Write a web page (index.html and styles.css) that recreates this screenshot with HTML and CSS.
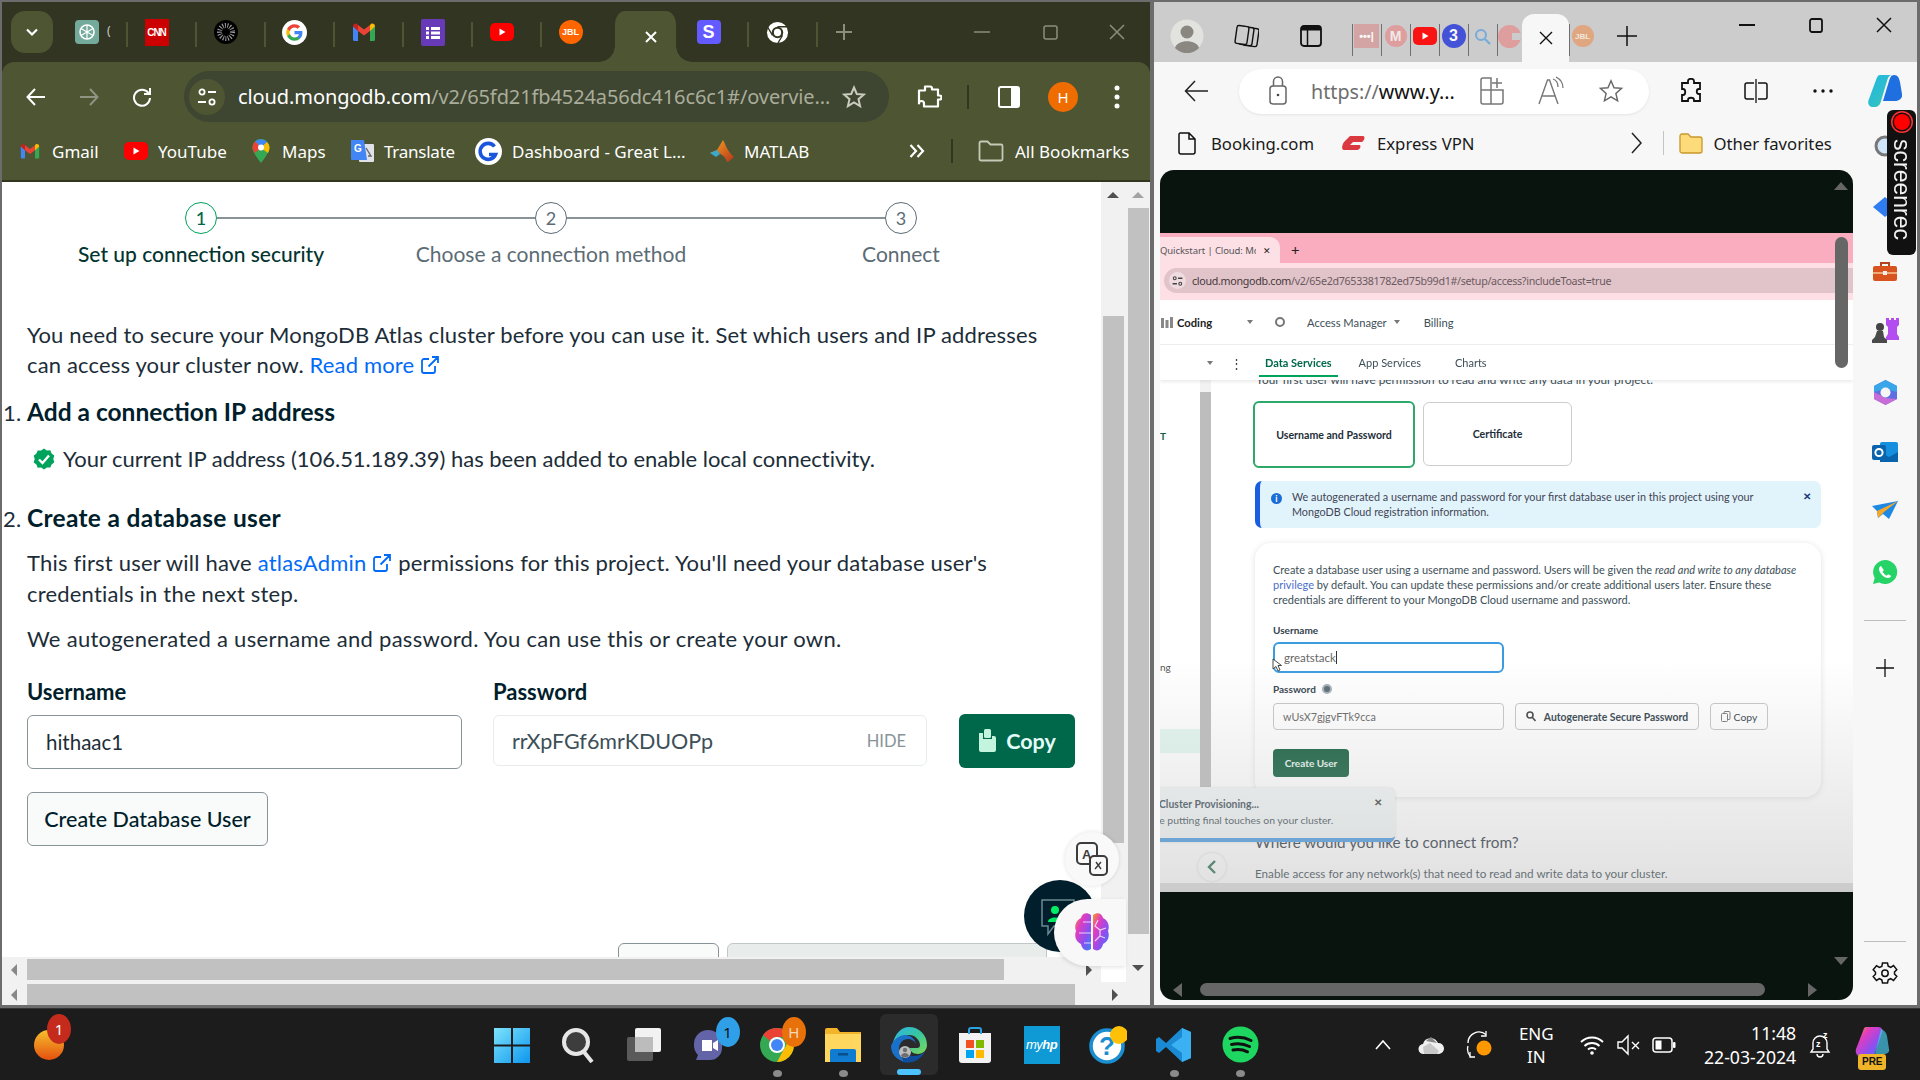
FILE: index.html
```html
<!DOCTYPE html>
<html lang="en">
<head>
<meta charset="utf-8">
<title>Desktop</title>
<link rel="stylesheet" href="styles.css">
</head>
<body>
<svg class="defs" width="0" height="0" aria-hidden="true">
  <defs>
    <symbol id="gmail" viewBox="0 0 24 24"><path fill="#4285f4" d="M1 6v13.5A1.5 1.5 0 0 0 2.5 21H6V10z"/><path fill="#34a853" d="M18 10v11h3.500a1.500 1.500 0 0 0 1.500-1.500V6z"/><path fill="#ea4335" d="M6 11V5l6 4.500L18 5v6l-6 4.500z"/><path fill="#c5221f" d="M1 6.500C1 3.500 4 3 5 4l1 1v6z"/><path fill="#fbbc04" d="M23 6.500C23 3.500 20 3 19 4l-1 1v6z"/></symbol>
    <symbol id="yt" viewBox="0 0 24 24"><rect x="0" y="3" width="24" height="18" rx="5" fill="#f00"/><path fill="#fff" d="M9.500 8.500v7l6-3.500z"/></symbol>
    <symbol id="g" viewBox="0 0 24 24"><path fill="#4285f4" d="M22.560 12.250c0-.78-.07-1.530-.2-2.250H12v4.260h5.920c-.26 1.370-1.040 2.530-2.210 3.310v2.770h3.570c2.080-1.920 3.280-4.740 3.280-8.090z"/><path fill="#34a853" d="M12 23c2.970 0 5.460-.98 7.280-2.660l-3.570-2.770c-.98.66-2.230 1.060-3.710 1.060-2.860 0-5.290-1.930-6.160-4.530H2.180v2.840C3.990 20.530 7.700 23 12 23z"/><path fill="#fbbc05" d="M5.840 14.090c-.22-.66-.35-1.360-.35-2.090s.13-1.430.35-2.090V7.070H2.180C1.430 8.550 1 10.220 1 12s.43 3.450 1.180 4.930l3.660-2.840z"/><path fill="#ea4335" d="M12 5.380c1.620 0 3.060.56 4.210 1.640l3.150-3.150C17.450 2.090 14.970 1 12 1 7.700 1 3.990 3.470 2.180 7.070l3.660 2.840c.87-2.600 3.300-4.530 6.160-4.530z"/></symbol>
    <symbol id="extlink" viewBox="0 0 20 20"><path fill="none" stroke="currentColor" stroke-width="1.800" d="M9 4H4a2 2 0 0 0-2 2v10a2 2 0 0 0 2 2h9a2 2 0 0 0 2-2v-5M8.500 11.500 17.500 2.500M12 2h6v6"/></symbol>
    <linearGradient id="brainGrad" x1="0" y1="0" x2="1" y2="1"><stop offset="0" stop-color="#f59a23"/><stop offset=".3" stop-color="#e23cc0"/><stop offset=".65" stop-color="#8b4ff0"/><stop offset="1" stop-color="#3b82f6"/></linearGradient>
    <linearGradient id="copGrad" x1="0" y1="0" x2="1" y2="1"><stop offset="0" stop-color="#1fb6e8"/><stop offset=".6" stop-color="#2fc0c8"/><stop offset="1" stop-color="#37d08a"/></linearGradient>
    <linearGradient id="edgeGrad" x1="0" y1="0" x2="1" y2="1"><stop offset="0" stop-color="#2fb5e8"/><stop offset=".5" stop-color="#36c6a0"/><stop offset="1" stop-color="#7fd856"/></linearGradient>
    <linearGradient id="flame" x1="0" y1="0" x2="0" y2="1"><stop offset="0" stop-color="#f7c02c"/><stop offset="1" stop-color="#e4500f"/></linearGradient>
    <linearGradient id="winGrad" x1="0" y1="0" x2="1" y2="1"><stop offset="0" stop-color="#7de3fb"/><stop offset="1" stop-color="#0d96ee"/></linearGradient>
    <linearGradient id="matlab" x1="0" y1="0" x2="1" y2="1"><stop offset="0" stop-color="#f7a823"/><stop offset="1" stop-color="#b5341a"/></linearGradient>
  </defs>
</svg>

<div class="desktop">
  <section class="chrome">
    <div class="c-tabs">
      <div class="c-drop"><svg width="16" height="16" viewBox="0 0 16 16"><path d="M3 5.500 8 10.500 13 5.500" fill="none" stroke="#fff" stroke-width="2.200"/></svg></div>
      <div class="c-tab c-tab-first"><svg width="24" height="24" viewBox="0 0 24 24"><rect width="24" height="24" rx="4" fill="#74aa9c"/><circle cx="12" cy="12" r="7" fill="none" stroke="#fff" stroke-width="1.600"/><path d="M12 5v14M6 8.500l12 7M6 15.500l12-7" stroke="#fff" stroke-width="1.200"/></svg><span class="c-cut">(</span></div>
      <div class="c-tab"><span class="cnn">CNN</span></div>
      <div class="c-tab"><svg width="24" height="24" viewBox="0 0 24 24"><circle cx="12" cy="12" r="12" fill="#000"/><circle cx="12" cy="12" r="6.500" fill="none" stroke="#999" stroke-width="5" stroke-dasharray="1 1.400"/></svg></div>
      <div class="c-tab"><svg width="25" height="25" viewBox="0 0 25 25"><circle cx="12.500" cy="12.500" r="12.500" fill="#fff"/><svg x="3.500" y="3.500" width="18" height="18"><use href="#g"/></svg></svg></div>
      <div class="c-tab"><svg width="24" height="24"><use href="#gmail"/></svg></div>
      <div class="c-tab"><svg width="24" height="27" viewBox="0 0 24 27"><rect width="24" height="27" fill="#673ab7" rx="2"/><path d="M5 8h3v3H5zM10 8h9v3h-9zM5 12.500h3v3H5zM10 12.500h9v3h-9zM5 17h3v3H5zM10 17h9v3h-9z" fill="#fff"/></svg></div>
      <div class="c-tab"><svg width="24" height="24"><use href="#yt"/></svg></div>
      <div class="c-tab c-tab-last"><span class="jbl">JBL</span></div>
      <div class="c-active"><svg width="14" height="14" viewBox="0 0 14 14"><path d="M2 2 12 12M12 2 2 12" stroke="#fff" stroke-width="2"/></svg></div>
      <div class="c-tab"><span class="stripe">S</span></div>
      <div class="c-tab"><svg width="23" height="23" viewBox="0 0 24 24"><circle cx="12" cy="12" r="11" fill="#fff"/><circle cx="12" cy="12" r="6" fill="#323521"/><circle cx="12" cy="12" r="3.800" fill="#fff"/><path d="M12 6h10M6.800 15 1.800 6.500M17.200 15l-5 8.500" stroke="#323521" stroke-width="1.400"/></svg></div>
      <div class="c-plus"><svg width="18" height="18" viewBox="0 0 18 18"><path d="M9 1v16M1 9h16" stroke="#8b8e7c" stroke-width="2"/></svg></div>
      <div class="c-win">
        <span class="c-ctl"><svg width="16" height="16" viewBox="0 0 16 16"><path d="M0 8h16" stroke="#8b8e7c" stroke-width="1.500"/></svg></span>
        <span class="c-ctl"><svg width="15" height="15" viewBox="0 0 15 15"><rect x="1" y="1" width="13" height="13" rx="2" fill="none" stroke="#8b8e7c" stroke-width="1.500"/></svg></span>
        <span class="c-ctl"><svg width="16" height="16" viewBox="0 0 16 16"><path d="M1 1 15 15M15 1 1 15" stroke="#8b8e7c" stroke-width="1.500"/></svg></span>
      </div>
    </div>

    <div class="c-bar">
      <span class="ib"><svg width="20" height="18" viewBox="0 0 20 18"><path d="M19 9H2M9 1 1.500 9 9 17" fill="none" stroke="#fff" stroke-width="2"/></svg></span>
      <span class="ib"><svg width="20" height="18" viewBox="0 0 20 18"><path d="M1 9h17M11 1l7.500 8L11 17" fill="none" stroke="#8e9481" stroke-width="2"/></svg></span>
      <span class="ib"><svg width="20" height="20" viewBox="0 0 20 20"><path d="M16.500 6A8 8 0 1 0 18 11" fill="none" stroke="#fff" stroke-width="2"/><path d="M18 1v6h-6" fill="none" stroke="#fff" stroke-width="2"/></svg></span>
      <div class="omni">
        <span class="chip"><svg width="20" height="18" viewBox="0 0 20 18"><circle cx="5" cy="4" r="2.600" fill="none" stroke="#fff" stroke-width="1.800"/><path d="M11 4h8M1 14h8" stroke="#fff" stroke-width="2"/><circle cx="15" cy="14" r="2.600" fill="none" stroke="#fff" stroke-width="1.800"/></svg></span>
        <span class="url"><b>cloud.mongodb.com</b>/v2/65fd21fb4524a56dc416c6c1#/overvie…</span>
        <svg class="omni-star" width="24" height="24" viewBox="0 0 24 24"><path d="M12 2.500 14.800 9l7 .6-5.300 4.600 1.600 6.900-6.100-3.700-6.100 3.700 1.600-6.900L2.200 9.600l7-.6z" fill="none" stroke="#c8cbbd" stroke-width="2"/></svg>
      </div>
      <span class="ib ext"><svg width="26" height="26" viewBox="0 0 26 26"><path d="M9 3h5a2 2 0 0 1 2 2v1h6v6h1.500a1.500 1.500 0 0 1 0 4H22v7H8v-3a2.500 2.500 0 0 0-5 0V7h6z" transform="translate(0 -.5)" fill="none" stroke="#fff" stroke-width="2.200" stroke-linejoin="round"/></svg></span>
      <span class="c-sep"></span>
      <span class="ib side"><svg width="22" height="22" viewBox="0 0 22 22"><rect x="1" y="1" width="20" height="20" rx="2" fill="none" stroke="#fff" stroke-width="2"/><rect x="13" y="1" width="8" height="20" rx="1" fill="#fff"/></svg></span>
      <span class="ib prof"><span class="avatar">H</span></span>
      <span class="ib prof"><svg width="6" height="24" viewBox="0 0 6 24"><circle cx="3" cy="3" r="2.500" fill="#fff"/><circle cx="3" cy="12" r="2.500" fill="#fff"/><circle cx="3" cy="21" r="2.500" fill="#fff"/></svg></span>
    </div>

    <div class="c-marks">
      <span class="bm bm-gmail"><svg width="20" height="20"><use href="#gmail"/></svg>Gmail</span>
      <span class="bm"><svg width="24" height="24"><use href="#yt"/></svg>YouTube</span>
      <span class="bm bm-maps"><svg width="18" height="24" viewBox="0 0 18 24"><path d="M9 0a8.500 8.500 0 0 0-8.500 8.500C.5 14 9 24 9 24s8.500-10 8.500-15.500A8.500 8.500 0 0 0 9 0z" fill="#34a853"/><path d="M2 4 16 14c1-2 1.500-4 1.500-5.500A8.500 8.500 0 0 0 15 3z" fill="#fbbc04"/><path d="M3 2.500a8.500 8.500 0 0 1 12 .5L9 8.500z" fill="#4285f4"/><path d="M.5 8.500c0-2.500 1-4.500 2.500-6L9 8.500 3.200 14C1.500 12 .5 10 .5 8.500z" fill="#ea4335"/><circle cx="9" cy="8.500" r="3" fill="#fff"/></svg>Maps</span>
      <span class="bm"><svg width="24" height="24" viewBox="0 0 24 24"><rect x="9" y="5" width="15" height="18" rx="1" fill="#dfe3e8"/><path d="M16 9l5 8h-3" fill="none" stroke="#666" stroke-width="1.400"/><path d="M1 1h13l3 20H2a1 1 0 0 1-1-1z" fill="#4285f4"/><text x="4" y="13" class="gt">G</text></svg><span class="bm-tight">Translate</span></span>
      <span class="bm"><svg width="27" height="27" viewBox="0 0 27 27"><circle cx="13.500" cy="13.500" r="13.500" fill="#fff"/><path d="M19.500 8.500a8 8 0 1 0 1 8h-6.500" fill="none" stroke="#1a56db" stroke-width="3.600"/></svg>Dashboard - Great L...</span>
      <span class="bm"><svg width="24" height="24" viewBox="0 0 24 24"><path d="M0 14l7-3 6-10c2 3 4 11 11 17-3 2-5 5-7 5-2-6-5-7-8-9z" fill="url(#matlab)"/><path d="M0 14l7-3 3 4-4 3z" fill="#3ca9c6"/></svg>MATLAB</span>
      <span class="bm-more"><svg width="16" height="14" viewBox="0 0 16 14"><path d="M1.500 1 7 7 1.500 13M8.500 1 14 7 8.500 13" fill="none" stroke="#fff" stroke-width="2.200"/></svg></span>
      <span class="c-sep c-sep-tall"></span>
      <span class="bm bm-all"><svg width="26" height="22" viewBox="0 0 26 22"><path d="M1.500 19V3a1.500 1.500 0 0 1 1.500-1.500h6.500l3 3H23a1.500 1.500 0 0 1 1.500 1.500v13a1.500 1.500 0 0 1-1.500 1.500H3A1.500 1.500 0 0 1 1.500 19z" fill="none" stroke="#c6c9b8" stroke-width="1.800"/></svg>All Bookmarks</span>
    </div>

    <div class="c-page">
      <div class="c-left">
        <div class="c-inner">
          <main class="atlas">
            <div class="stepper">
              <div class="step step-on"><span class="dot">1</span><span class="step-l">Set up connection security</span></div>
              <div class="step"><span class="dot">2</span><span class="step-l">Choose a connection method</span></div>
              <div class="step step-end"><span class="dot">3</span><span class="step-l">Connect</span></div>
            </div>
            <p class="lead">You need to secure your MongoDB Atlas cluster before you can use it. Set which users and IP addresses can access your cluster now. <a class="lnk">Read more <svg class="ext-i" width="20" height="20"><use href="#extlink"/></svg></a></p>
            <ol class="tasks">
              <li>
                <h3>Add a connection IP address</h3>
                <div class="ok"><svg width="22" height="22" viewBox="0 0 22 22"><path d="M11 .5l2.900 1.900 3.400-.1 1.300 3.200 2.700 2.100-1 3.400 1 3.300-2.700 2.100-1.300 3.200-3.400-.1L11 21.500l-2.900-1.900-3.400.1-1.300-3.200L.7 14.400l1-3.400-1-3.300 2.700-2.100 1.300-3.200 3.400.1z" fill="#00a35c"/><path d="M6 11.500l3.500 3.500 6.500-7.500" fill="none" stroke="#fff" stroke-width="2.400"/></svg>Your current IP address (106.51.189.39) has been added to enable local connectivity.</div>
              </li>
              <li>
                <h3>Create a database user</h3>
                <p class="body1">This first user will have <a class="lnk">atlasAdmin <svg class="ext-i" width="20" height="20"><use href="#extlink"/></svg></a> permissions for this project. You'll need your database user's credentials in the next step.</p>
                <p class="body2">We autogenerated a username and password. You can use this or create your own.</p>
              </li>
            </ol>
            <div class="creds">
              <div class="cred-u"><label>Username</label><div class="inp">hithaac1</div></div>
              <div class="cred-p"><label>Password</label><div class="inp inp-pw"><span>rrXpFGf6mrKDUOPp</span><em>HIDE</em></div></div>
              <button class="copy"><svg width="20" height="26" viewBox="0 0 20 26"><rect x="6" y="1" width="7" height="9" rx="1.500" fill="#c3f5de"/><path d="M1 5h4v6h9V8h2a2 2 0 0 1 2 2v12a2 2 0 0 1-2 2H3a2 2 0 0 1-2-2z" fill="#c3f5de"/></svg>Copy</button>
            </div>
            <button class="create">Create Database User</button>
            <div class="foot"><span class="foot-a"></span><span class="foot-b"></span></div>
          </main>
          <div class="vbar vbar-in"><i class="up"></i><b class="th-in"></b></div>
        </div>
        <div class="hbar hbar-in"><i class="lft"></i><b></b><i class="rgt"></i></div>
        <div class="hbar hbar-out"><i class="lft"></i><b></b><i class="rgt"></i></div>
      </div>
      <div class="vbar vbar-out"><i class="up up-dim"></i><b class="th-out"></b><i class="dn"></i></div>

      <div class="fab-tr"><svg width="32" height="34" viewBox="0 0 32 34"><rect x="1" y="1" width="20" height="21" rx="4" fill="#f9f9f9" stroke="#3c3c3c" stroke-width="2"/><text x="6" y="17" class="fab-a">A</text><rect x="14" y="14" width="17" height="19" rx="4" fill="#f9f9f9" stroke="#3c3c3c" stroke-width="2"/><path d="M19 27l6-7M20 20l5 7" stroke="#3c3c3c" stroke-width="1.400"/></svg></div>
      <div class="fab-chat"><svg width="36" height="40" viewBox="0 0 36 40"><path d="M2 2h32v26H14l-6 8v-8H2z" fill="none" stroke="#6b8a94" stroke-width="1.500"/><circle cx="15" cy="12" r="4" fill="#00ed64"/><path d="M8 24c0-6 14-6 14 0z" fill="#00ed64"/></svg></div>
      <div class="fab-brain"><svg width="36" height="42" viewBox="0 0 36 42"><path d="M17 3C13 0 8 1 7 6 2 8 0 14 2 19c-2 5 0 11 5 13 1 6 6 8 10 5z" fill="url(#brainGrad)"/><path d="M19 3c4-3 9-2 10 3 5 2 7 8 5 13 2 5 0 11-5 13-1 6-6 8-10 5z" fill="url(#brainGrad)"/><path d="M17 10H9M17 21H5M17 31h-7M24 8l-3 6 5 4 6-2M26 18v6l-5 5M26 24l5 2" fill="none" stroke="#fff" stroke-opacity=".75" stroke-width="1.200"/></svg></div>
    </div>
  </section>

  <section class="edge">
    <div class="e-tabs">
      <svg class="e-avatar" width="34" height="34" viewBox="0 0 34 34"><circle cx="17" cy="17" r="16.500" fill="#e2e2de"/><circle cx="17" cy="13" r="6.500" fill="#8a8780"/><path d="M5 29c2-9 22-9 24 0a16.500 16.500 0 0 1-24 0z" fill="#8a8780"/></svg>
      <svg class="e-ws" width="25" height="24" viewBox="0 0 25 24"><rect x="10" y="4" width="14" height="18" rx="2" fill="#ccc" stroke="#111" stroke-width="1.400" transform="rotate(8 17 13)"/><rect x="6" y="3" width="13" height="18" rx="2" fill="#ccc" stroke="#111" stroke-width="1.400" transform="rotate(8 12 12)"/><rect x="2" y="2" width="12" height="18" rx="2" fill="#ccc" stroke="#111" stroke-width="1.400" transform="rotate(8 8 11)"/></svg>
      <svg class="e-vt" width="22" height="22" viewBox="0 0 22 22"><rect x="1" y="1" width="20" height="20" rx="3" fill="none" stroke="#111" stroke-width="1.800"/><path d="M1 5.500h20V4a3 3 0 0 0-3-3H4a3 3 0 0 0-3 3z" fill="#111"/><path d="M7.500 5v16" stroke="#111" stroke-width="1.500"/></svg>
      <div class="e-strip">
        <span class="e-t"><span class="e-dots">•••|</span></span>
        <span class="e-t"><span class="e-m">M</span></span>
        <span class="e-t e-full"><svg width="24" height="24"><use href="#yt"/></svg></span>
        <span class="e-t e-full"><span class="e-3">3</span></span>
        <span class="e-t"><svg width="17" height="17" viewBox="0 0 17 17"><circle cx="7" cy="7" r="5" fill="none" stroke="#6ea8dc" stroke-width="2"/><path d="M11 11l5 5" stroke="#6ea8dc" stroke-width="2.200"/></svg></span>
        <span class="e-t e-t-pre"><span class="e-pac"><i></i></span></span>
        <span class="e-active"><svg width="14" height="14" viewBox="0 0 14 14"><path d="M1 1l12 12M13 1 1 13" stroke="#111" stroke-width="1.400"/></svg></span>
        <span class="e-t e-t-last"><span class="e-jbl">JBL</span></span>
        <svg class="e-plus" width="24" height="24" viewBox="0 0 24 24"><path d="M12 2v20M2 12h20" stroke="#111" stroke-width="1.500"/></svg>
      </div>
      <div class="e-win">
        <span><svg width="16" height="4" viewBox="0 0 16 4"><path d="M0 2h16" stroke="#111" stroke-width="2"/></svg></span>
        <span><svg width="14" height="15" viewBox="0 0 14 15"><rect x="1" y="1" width="12" height="13" rx="2" fill="none" stroke="#111" stroke-width="1.800"/></svg></span>
        <span><svg width="16" height="16" viewBox="0 0 16 16"><path d="M1 1l14 14M15 1 1 15" stroke="#111" stroke-width="1.500"/></svg></span>
      </div>
    </div>
    <div class="e-bar">
      <svg class="e-back" width="25" height="22" viewBox="0 0 25 22"><path d="M24 11H2M11 1 1.500 11 11 21" fill="none" stroke="#222" stroke-width="1.500"/></svg>
      <div class="e-omni">
        <svg width="20" height="30" viewBox="0 0 20 30"><rect x="2" y="10" width="16" height="18" rx="3" fill="none" stroke="#666" stroke-width="1.500"/><path d="M5.500 10V5.500a4.500 4.500 0 0 1 9 0V10" fill="none" stroke="#666" stroke-width="1.500"/><circle cx="10" cy="19" r="1.300" fill="#444"/></svg>
        <span class="e-url"><i>https://</i>www.y...</span>
        <svg class="e-o1" width="24" height="30" viewBox="0 0 24 30"><path d="M1 14h10V2H3a2 2 0 0 0-2 2zM1 14v12a2 2 0 0 0 2 2h8V14M11 14h12v12a2 2 0 0 1-2 2H11M17 2v10M12 7h10" fill="none" stroke="#777" stroke-width="1.500"/></svg>
        <svg class="e-o2" width="26" height="30" viewBox="0 0 26 30"><path d="M1 28 9.500 4h2L20 28M4.500 20h12.500" fill="none" stroke="#777" stroke-width="1.400"/><path d="M15 3c3 1 5 4 5 8M18 1c4 2 7 6 7 11" fill="none" stroke="#777" stroke-width="1.300"/></svg>
        <svg class="e-o3" width="26" height="26" viewBox="0 0 24 24"><path d="M12 2.500 14.800 9l7 .6-5.300 4.600 1.600 6.900-6.100-3.700-6.100 3.700 1.600-6.900L2.200 9.600l7-.6z" fill="none" stroke="#666" stroke-width="1.300"/></svg>
      </div>
      <svg class="e-puz" width="24" height="26" viewBox="0 0 24 26"><path d="M9 3c0-3 6-3 6 0v2h6v6h-1c-3 0-3 5 0 5h1v7h-6v-1c0-3-6-3-6 0v1H3v-6h1c3 0 3-6 0-6H3V5h6z" fill="none" stroke="#111" stroke-width="1.800"/></svg>
      <svg class="e-split" width="24" height="26" viewBox="0 0 24 26"><path d="M10 5H3a2 2 0 0 0-2 2v12a2 2 0 0 0 2 2h7M14 5h7a2 2 0 0 1 2 2v12a2 2 0 0 1-2 2h-7" fill="none" stroke="#111" stroke-width="1.500"/><path d="M12 1v24" stroke="#111" stroke-width="1.300"/></svg>
      <svg class="e-dotsb" width="20" height="4" viewBox="0 0 20 4"><circle cx="2" cy="2" r="1.700" fill="#111"/><circle cx="10" cy="2" r="1.700" fill="#111"/><circle cx="18" cy="2" r="1.700" fill="#111"/></svg>
      <svg class="e-cop" width="34" height="34" viewBox="0 0 34 34"><path d="M26 1c4 0 5 3 6 7l2 12c1 4-3 7-7 7H15l6-20c1-3 2-6 5-6z" fill="#1f6fe0"/><path d="M12 1h12c-3 0-4 3-5 6l-6 20c-1 4-3 6-7 6H5C1 33-1 29 1 25L8 6c1-3 2-5 4-5z" fill="url(#copGrad)"/></svg>
    </div>
    <div class="e-favs">
      <span class="fav"><svg width="18" height="23" viewBox="0 0 18 23"><path d="M2 1h9l6 6v13a2 2 0 0 1-2 2H3a2 2 0 0 1-2-2V2zM11 1v6h6" fill="none" stroke="#111" stroke-width="1.500"/></svg>Booking.com</span>
      <span class="fav fav-ev"><svg width="24" height="20" viewBox="0 0 24 20"><path d="M9 0h13c3 0 1 6-2 6H12L9 9h9c3 0 1 5-2 5H3C0 14 1 9 3 6z" transform="translate(0 3)" fill="#da3940"/></svg>Express VPN</span>
      <svg class="fav-more" width="11" height="22" viewBox="0 0 11 22"><path d="M1 1l9 10-9 10" fill="none" stroke="#222" stroke-width="1.500"/></svg>
      <span class="fav-sep"></span>
      <span class="fav fav-oth"><svg width="24" height="22" viewBox="0 0 24 22"><path d="M1 4a2 2 0 0 1 2-2h6l3 3h9a2 2 0 0 1 2 2v12a2 2 0 0 1-2 2H3a2 2 0 0 1-2-2z" fill="#fddb7a" stroke="#c8982c" stroke-width="1.300"/></svg>Other favorites</span>
    </div>
    <div class="e-main">
      <div class="video">
        <div class="frame">
          <div class="v-tabs"><span class="v-tab"><span>Quickstart | Cloud: Mo</span><em>✕</em></span><em class="v-new">+</em></div>
          <div class="v-addr"><div class="v-omni"><span class="v-chip"><svg width="11" height="10" viewBox="0 0 20 18"><circle cx="5" cy="4" r="2.600" fill="none" stroke="#444" stroke-width="2"/><path d="M11 4h8M1 14h8" stroke="#444" stroke-width="2.400"/><circle cx="15" cy="14" r="2.600" fill="none" stroke="#444" stroke-width="2"/></svg></span>cloud.mongodb.com<span>/v2/65e2d7653381782ed75b99d1#/setup/access?includeToast=true</span></div></div>
          <div class="v-nav"><svg class="v-bars" width="12" height="11" viewBox="0 0 12 11"><path d="M0 1h3v10H0zM4.500 3h3v8h-3zM9 0h3v11H9z" fill="#888"/></svg><b class="v-coding">Coding</b><i class="v-drop"></i><i class="v-gear"></i><span class="v-am">Access Manager</span><i class="v-drop v-drop2"></i><span class="v-bill">Billing</span></div>
          <div class="v-sub"><i class="v-drop v-d3"></i><em class="v-keb">⋮</em><b class="v-cur">Data Services</b><span class="v-as">App Services</span><span class="v-ch">Charts</span></div>
          <div class="v-body">
            <div class="v-rail">
              <div class="v-railcol"><span class="v-t">T</span><span class="v-ng">ng</span><span class="v-hl"></span></div>
              <div class="v-scroll"></div>
            </div>
            <div class="v-main">
              <p class="v-clip">Your first user will have permission to read and write any data in your project.</p>
              <div class="v-cards"><div class="v-c v-c-on">Username and Password</div><div class="v-c">Certificate</div></div>
              <div class="v-info"><span class="v-i">i</span><p>We autogenerated a username and password for your first database user in this project using your MongoDB Cloud registration information.</p><em>✕</em></div>
              <div class="v-card">
                <p class="v-desc">Create a database user using a username and password. Users will be given the <i>read and write to any database</i> <u>privilege</u> by default. You can update these permissions and/or create additional users later. Ensure these credentials are different to your MongoDB Cloud username and password.</p>
                <label class="v-l v-lu">Username</label>
                <div class="v-inp v-focus"><span>greatstack</span><i class="v-caret"></i><svg class="v-cursor" width="10" height="14" viewBox="0 0 10 14"><path d="M1 1v10l3-2.500L6 13l2-1-2-4.500h3.500z" fill="#fff" stroke="#333" stroke-width=".9"/></svg></div>
                <label class="v-l v-lp">Password <i class="v-eye"></i></label>
                <div class="v-row"><div class="v-inp v-pw">wUsX7gjgvFTk9cca</div><div class="v-btn v-auto"><svg width="10" height="11" viewBox="0 0 10 11"><circle cx="4" cy="4" r="3" fill="none" stroke="#444" stroke-width="1.600"/><path d="M6 6l3.500 4" stroke="#444" stroke-width="1.600"/></svg>Autogenerate Secure Password</div><div class="v-btn v-copy"><svg width="10" height="11" viewBox="0 0 10 11"><rect x="3" y=".5" width="6" height="8" rx="1" fill="none" stroke="#777"/><rect x=".5" y="2.500" width="6" height="8" rx="1" fill="#fff" stroke="#777"/></svg>Copy</div></div>
                <div class="v-create">Create User</div>
              </div>
              <h4 class="v-h">Where would you like to connect from?</h4>
              <p class="v-en">Enable access for any network(s) that need to read and write data to your cluster.</p>
            </div>
            <div class="v-toast"><b>Cluster Provisioning...</b><span>We're putting final touches on your cluster.</span><em>✕</em></div>
            <div class="v-back"><svg width="10" height="14" viewBox="0 0 10 14"><path d="M8 1 2 7l6 6" fill="none" stroke="#14603f" stroke-width="2.400"/></svg></div>
            <div class="v-fade"></div>
          </div>
        </div>
        <i class="vid-up"></i><i class="vid-dn"></i><i class="vid-l"></i><i class="vid-r"></i>
        <b class="vid-h"></b><b class="vid-v"></b>
      </div>
      <aside class="e-side">
        <svg width="24" height="24" viewBox="0 0 24 24"><circle cx="12" cy="11" r="9" fill="#cfe6fa" stroke="#777" stroke-width="3"/><path d="M19 17l4 5" stroke="#777" stroke-width="3"/></svg>
        <svg width="26" height="24" viewBox="0 0 26 24"><path d="M13 2 25 12 13 22 1 12z" fill="#2f7bf0"/></svg>
        <svg width="26" height="24" viewBox="0 0 26 24"><path d="M9 6V3h8v3" fill="none" stroke="#b5451f" stroke-width="2"/><rect x="1" y="6" width="24" height="15" rx="2" fill="#d9531e"/><rect x="1" y="12" width="24" height="2" fill="#f0aa78"/><rect x="11" y="11" width="4" height="4" fill="#eee"/></svg>
        <svg width="28" height="28" viewBox="0 0 28 28"><path d="M15 1h3v2h2V1h3v2h2V1h3v7l-2 2v7l2 3v3H15v-3l2-3v-7l-2-2z" fill="#b44df0"/><circle cx="9" cy="10" r="4" fill="#444"/><path d="M6 14h6l1 6 3 3v3H1v-3l3-3z" fill="#4a4a4a"/></svg>
        <svg width="27" height="27" viewBox="0 0 27 27"><path d="M13.500 1 25 7v13l-11.500 6L2 20V7z" fill="#5f6ee0"/><path d="M13.500 1 25 7v6l-11.500-3L2 13V7z" fill="#38a6e8"/><path d="M2 13l11.500 6L25 20l-11.500 6L2 20z" fill="#c86dd8"/><circle cx="13.500" cy="13.500" r="5" fill="#f6f6f6"/></svg>
        <svg width="26" height="26" viewBox="0 0 26 26"><rect x="8" y="3" width="18" height="20" rx="2" fill="#1490df"/><path d="M8 13l9 5 9-5v10H8z" fill="#0a64ad"/><rect x="0" y="6" width="14" height="15" rx="2" fill="#0a64ad"/><circle cx="7" cy="13.500" r="3.600" fill="none" stroke="#fff" stroke-width="2"/></svg>
        <svg width="28" height="20" viewBox="0 0 28 20"><path d="M1 6 27 1 18 19l-6-5-5 4-1-7z" fill="#1e88e5"/><path d="M6 11 27 1 13 12l-6 6z" fill="#f9a825"/></svg>
        <svg width="26" height="26" viewBox="0 0 26 26"><path d="M13 1a12 12 0 0 0-10.300 18L1 25l6.200-1.600A12 12 0 1 0 13 1z" fill="#25d366"/><path d="M9 7c-1 0-2 1.500-2 3 0 4 5 9 9 9 1.600 0 3-1 3-2.300l-3-1.500-1.300 1.500c-1.500-.6-3.500-2.500-4.200-4.200l1.400-1.300z" fill="#fff"/></svg>
        <span class="side-sep side-s1"></span>
        <svg class="side-plus" width="20" height="20" viewBox="0 0 20 20"><path d="M10 1v18M1 10h18" stroke="#111" stroke-width="1.300"/></svg>
        <span class="side-sep side-s2"></span>
        <svg class="side-gear" width="26" height="26" viewBox="0 0 26 26"><path d="M10.500 2h5l.7 3.200 2.500 1.100 2.800-1.800 3.300 4.100-2.300 2.400v2l2.300 2.400-3.300 4.100-2.800-1.800-2.500 1.100-.7 3.200h-5l-.7-3.200-2.500-1.100-2.800 1.800L1.200 15.600l2.300-2.400v-2L1.200 8.800l3.300-4.100 2.800 1.800 2.500-1.100z" fill="none" stroke="#111" stroke-width="1.500"/><circle cx="13" cy="12.200" r="3.200" fill="none" stroke="#111" stroke-width="1.500"/></svg>
      </aside>
    </div>
    <div class="rec"><i></i><span>screenrec</span></div>
  </section>
</div>

<footer class="taskbar">
  <div class="tb-left"><span class="tb-flame"><svg width="32" height="34" viewBox="0 0 32 34"><ellipse cx="16" cy="17" rx="15" ry="15" fill="url(#flame)"/></svg><b>1</b></span></div>
  <div class="tb-apps">
    <span class="app"><svg width="36" height="36" viewBox="0 0 36 36"><path d="M0 1h17v16.500H0zM19 1h17v16.500H19zM0 19.500h17V36H0zM19 19.500h17V36H19z" fill="url(#winGrad)"/></svg></span>
    <span class="app"><svg width="34" height="36" viewBox="0 0 34 36"><circle cx="15" cy="15" r="12" fill="#3d3d3d" stroke="#e6e6e6" stroke-width="4"/><path d="M23 25l8 10" stroke="#e6e6e6" stroke-width="4"/></svg></span>
    <span class="app"><svg width="36" height="34" viewBox="0 0 36 34"><rect x="9" y="0" width="26" height="24" rx="2" fill="#f2f2f2"/><rect x="1" y="9" width="26" height="24" rx="2" fill="#5a5a5a"/><rect x="9" y="9" width="18" height="15" fill="#bcbcbc"/></svg></span>
    <span class="app"><svg width="36" height="36" viewBox="0 0 36 36"><path d="M15 3a14 14 0 0 1 14 14v4a12 12 0 0 1-12 12H3l2-5A14 14 0 0 1 1 17 14 14 0 0 1 15 3z" fill="#6264a7"/><path d="M9 13h10v11H9zM20 16l5-3v11l-5-3z" fill="#fff"/></svg><b class="bd-blue">1</b></span>
    <span class="app app-dot"><svg width="36" height="36" viewBox="0 0 36 36"><circle cx="18" cy="18" r="17" fill="#34a853"/><path d="M18 1a17 17 0 0 1 15 9H18a8 8 0 0 0-7 4L4 8A17 17 0 0 1 18 1z" fill="#ea4335"/><path d="M33 10a17 17 0 0 1-15 25l7-13a8 8 0 0 0 0-12z" fill="#fbbc05"/><circle cx="18" cy="18" r="8" fill="#fff"/><circle cx="18" cy="18" r="6" fill="#4285f4"/></svg><b class="bd-orange">H</b></span>
    <span class="app app-dot"><svg width="36" height="34" viewBox="0 0 36 34"><path d="M0 2a2 2 0 0 1 2-2h10l3 4h21v30H0z" fill="#f4b429"/><rect y="6" width="36" height="28" fill="#ffd75e"/><path d="M7 21h22a2 2 0 0 1 2 2v11H5V23a2 2 0 0 1 2-2z" fill="#0f7bd1"/><rect x="13" y="25" width="10" height="2.500" fill="#0a4f8a"/></svg></span>
    <span class="app app-cur"><svg width="38" height="38" viewBox="0 0 38 38"><path d="M19 1a18 18 0 0 1 18 18c0 5-4 9-9 9s-8-3-8-6h7c2 0 3-1 3-3 0-5-5-10-11-10C12 9 7 12 3 17 5 8 11 1 19 1z" fill="url(#edgeGrad)"/><path d="M1 20c2-6 8-11 14-11s10 4 11 9c-1-3-5-5-8-5-5 0-9 4-9 10 0 4 2 9 7 13C8 35 1 29 1 20z" fill="#1a70c8"/><path d="M12 36c3 1 6 1 10 0 5-1 10-5 13-10-5 4-12 5-16 3-2-1-4-2-5-5 0 4 0 9-2 12z" fill="#0d4f9e"/><circle cx="15" cy="26" r="6" fill="#bdbdbd"/><circle cx="15" cy="24" r="2.200" fill="#6e6e6e"/><path d="M11 30c1-4 7-4 8 0a6 6 0 0 1-8 0z" fill="#6e6e6e"/></svg><i class="u-blob"></i></span>
    <span class="app"><svg width="32" height="38" viewBox="0 0 32 38"><path d="M0 7h32v27a3 3 0 0 1-3 3H3a3 3 0 0 1-3-3z" fill="#f2f2f2"/><path d="M10 8V4a2 2 0 0 1 2-2h8a2 2 0 0 1 2 2v4" fill="none" stroke="#2aa3e5" stroke-width="2"/><rect x="7" y="14" width="8" height="8" fill="#f25022"/><rect x="17" y="14" width="8" height="8" fill="#7fba00"/><rect x="7" y="24" width="8" height="8" fill="#00a4ef"/><rect x="17" y="24" width="8" height="8" fill="#ffb900"/></svg></span>
    <span class="app"><span class="myhp">my<i>hp</i></span></span>
    <span class="app"><svg width="38" height="38" viewBox="0 0 38 38"><circle cx="18" cy="20" r="16" fill="#fff" stroke="#1a8ed1" stroke-width="3.600"/><text x="18" y="29" class="qmark">?</text><circle cx="30" cy="9" r="9" fill="#ffc107"/></svg></span>
    <span class="app app-dot"><svg width="36" height="36" viewBox="0 0 36 36"><path d="M26 1 35 5v26l-9 4L10 20 3 26 0 24V12l3-2 7 6z" fill="#1a8ad4"/><path d="M26 1 35 5v26l-9 4V1zM26 10 15 18l11 8z" fill="#3bb0f2" fill-rule="evenodd"/></svg></span>
    <span class="app app-dot"><svg width="37" height="37" viewBox="0 0 37 37"><circle cx="18.500" cy="18.500" r="18" fill="#1ed760"/><path d="M8 12.500c7-2 14-1.500 21 2M9.500 18.500c6-1.500 12-1 18 2M11 24c5-1 10-.5 14.500 1.800" fill="none" stroke="#111" stroke-width="3" stroke-linecap="round"/></svg></span>
  </div>
  <div class="tb-tray">
    <span class="t-c"><svg width="16" height="10" viewBox="0 0 16 10"><path d="M1 9l7-8 7 8" fill="none" stroke="#fff" stroke-width="1.600"/></svg></span>
    <span class="t-cl"><svg width="26" height="20" viewBox="0 0 26 20"><path d="M6 19a5 5 0 0 1-1-10 8 8 0 0 1 15-1 5.500 5.500 0 0 1 1 11z" fill="#f0f0f0"/><path d="M8 6l5-4 6 6z" fill="#888"/><path d="M5 12l7-4 9 8-2 3H6z" fill="#c8c8c8"/></svg></span>
    <span class="t-sy"><svg width="26" height="30" viewBox="0 0 26 30"><path d="M20 4.500A11 11 0 0 0 2 13M4 26A11 11 0 0 1 2 16" fill="none" stroke="#fff" stroke-width="1.300"/><path d="M20 1v5h-5M4 22v5h5" fill="none" stroke="#fff" stroke-width="1.300"/><circle cx="18" cy="18" r="7.500" fill="#ff9800"/></svg></span>
    <span class="t-lang">ENG<br>IN</span>
    <span class="t-c2"><svg width="24" height="20" viewBox="0 0 24 20"><path d="M1 7c6-6 16-6 22 0M4.500 11c4-4 11-4 15 0M8 14.500c2-2 6-2 8 0" fill="none" stroke="#fff" stroke-width="1.800"/><circle cx="12" cy="18" r="1.800" fill="#fff"/></svg></span>
    <span class="t-c3"><svg width="24" height="22" viewBox="0 0 24 22"><path d="M1 8h4l6-6v18l-6-6H1z" fill="none" stroke="#fff" stroke-width="1.400"/><path d="M15 8l7 7M22 8l-7 7" stroke="#fff" stroke-width="1.400"/></svg></span>
    <span class="t-c4"><svg width="24" height="16" viewBox="0 0 24 16"><rect x="1" y="1" width="19" height="14" rx="3" fill="none" stroke="#fff" stroke-width="1.500"/><rect x="3.500" y="3.500" width="6" height="9" fill="#fff"/><rect x="21" y="5" width="2.500" height="6" rx="1" fill="#fff"/></svg></span>
    <span class="t-clock">11:48<br>22-03-2024</span>
    <span class="t-bell"><svg width="24" height="28" viewBox="0 0 24 28"><path d="M3 21h18l-2-3v-6a7 7 0 0 0-14 0v6zM9 23a3 3 0 0 0 6 0" fill="none" stroke="#fff" stroke-width="1.400"/><text x="8" y="16" class="zz">z</text><text x="15" y="7" class="zz">z</text></svg></span>
    <span class="t-cop"><svg width="36" height="36" viewBox="0 0 36 36"><path d="M12 0h12c4 0 5 3 4 6l-7 20c-1 3-3 4-6 4H8c-5 0-7-4-6-8L9 4c.5-2 1.500-4 3-4z" fill="url(#brainGrad)"/><path d="M27 2c3 1 5 3 6 7l2 13c1 3-2 5-5 5h-9z" fill="#46c8e8" fill-opacity=".7"/></svg><b>PRE</b></span>
  </div>
</footer>
</body>
</html>
```
FILE: styles.css
```css
* { box-sizing: border-box; }
html, body { margin: 0; padding: 0; width: 1920px; height: 1080px; overflow: hidden; background: #1c1c1c; }
body { font-family: "Noto Sans", "Liberation Sans", sans-serif; }
svg { display: block; flex: none; }
.defs { position: absolute; }
i, em { font-style: normal; }

.desktop { display: flex; height: 1008px; background: #6c6c6c; padding: 2px 3px 3px 2px; gap: 4px; }

/* ---------- Chrome window ---------- */
.chrome { width: 1148px; display: flex; flex-direction: column; background: #323521; position: relative; }
.c-tabs { height: 60px; display: flex; align-items: center; padding-left: 9px; background: #323521; }
.c-drop { width: 42px; height: 42px; border-radius: 14px; background: #4d5533; display: flex; align-items: center; justify-content: center; margin-right: 6px; }
.c-tab { width: 69px; height: 60px; display: flex; align-items: center; justify-content: center; padding-right: 12px; position: relative; }
.c-tab::after { content: ""; position: absolute; right: 0; top: 20px; width: 2px; height: 25px; background: #4d5533; }
.c-tab-first { padding-right: 14px; }
.c-tab-last::after { display: none; }
.c-cut { position: absolute; left: 48px; top: 20px; color: #ccc; font-size: 12px; }
.cnn { width: 24px; height: 27px; background: #c00; color: #fff; font: 700 10px "Liberation Sans", sans-serif; letter-spacing: -1px; display: flex; align-items: center; justify-content: center; }
.jbl { width: 24px; height: 24px; border-radius: 50%; background: #ff6600; color: #fff; font: 700 9px "Liberation Sans", sans-serif; display: flex; align-items: center; justify-content: center; }
.stripe { width: 24px; height: 24px; border-radius: 4px; background: #635bff; color: #fff; font: 700 18px "Liberation Sans", sans-serif; display: flex; align-items: center; justify-content: center; }
.c-active { width: 69px; height: 51px; margin-top: 9px; background: #4d5533; border-radius: 14px 14px 0 0; display: flex; align-items: center; justify-content: center; position: relative; background-clip: content-box; padding: 0 4px; }
.c-active svg { margin-left: 11px; }
.c-active::before, .c-active::after { content: ""; position: absolute; bottom: 0; width: 16px; height: 16px; }
.c-active::before { left: -12px; background: radial-gradient(circle at 0 0, transparent 15.500px, #4d5533 16px); }
.c-active::after { right: -12px; background: radial-gradient(circle at 100% 0, transparent 15.500px, #4d5533 16px); }
.c-plus { margin-left: 17px; width: 18px; }
.c-win { margin-left: auto; display: grid; grid-template-columns: 69px 68px 66px; }
.c-ctl { display: flex; align-items: center; justify-content: center; height: 60px; }

.c-bar { height: 60px; background: #4d5533; border-radius: 12px 12px 0 0; display: flex; align-items: center; padding: 9px 0 0 7px; }
.ib { width: 53px; height: 50px; display: flex; align-items: center; justify-content: center; }
.omni { margin-left: 16px; width: 705px; height: 51px; border-radius: 26px; background: #3e4530; display: flex; align-items: center; padding-left: 5px; }
.chip { width: 36px; height: 36px; border-radius: 50%; background: #4d5533; display: flex; align-items: center; justify-content: center; }
.url { margin-left: 13px; width: 593px; font-size: 20px; white-space: nowrap; color: #a9ad9b; letter-spacing: -.1px; }
.url b { font-weight: 400; color: #fff; }
.omni-star { margin-left: 11px; }
.ext { margin-left: 15px; width: 50px; }
.c-sep { width: 2px; height: 24px; background: #323521; margin-left: 13px; }
.side { margin-left: 15px; width: 50px; }
.prof { margin-left: 4px; width: 50px; }
.avatar { width: 30px; height: 30px; border-radius: 50%; background: #ee6c00; color: #fff; font-size: 15px; display: flex; align-items: center; justify-content: center; }

.c-marks { height: 60px; background: #4d5533; display: grid; grid-template-columns: 104px 128px 98px 125px 235px 195px 46px 27px auto; align-items: center; padding-left: 18px; border-bottom: 2px solid #33361f; }
.bm { display: flex; align-items: center; gap: 10px; color: #fff; font-size: 17px; white-space: nowrap; }
.bm-gmail { gap: 12px; }
.bm-maps { gap: 12px; }
.bm-tight { letter-spacing: -.25px; }
.bm-more { padding-left: 4px; }
.c-sep-tall { height: 24px; margin: 0; }
.bm-all { gap: 11px; color: #fff; }
.gt { font: 700 10px "Liberation Sans", sans-serif; fill: #fff; }

.c-page { flex: 1; min-height: 0; display: flex; background: #fff; position: relative; font-family: Lato, sans-serif; color: #1c2d38; }
.c-left { width: 1124px; display: flex; flex-direction: column; }
.c-inner { flex: 1; min-height: 0; display: flex; }
.atlas { width: 1099px; overflow: hidden; padding-left: 25px; }
.stepper { display: grid; grid-template-columns: repeat(3, 350px); margin-left: -1px; padding-top: 20px; }
.step { position: relative; display: flex; flex-direction: column; align-items: center; color: #5c6c75; }
.step::after { content: ""; position: absolute; left: 191px; top: 15px; width: 318px; height: 2px; background: #889397; }
.step-end::after { display: none; }
.dot { width: 32px; height: 32px; border-radius: 50%; border: 1.500px solid #5c6c75; display: flex; align-items: center; justify-content: center; font-size: 18px; background: #fff; }
.step-l { margin-top: 6px; font-size: 21px; line-height: 28px; white-space: nowrap; }
.step-on { color: #023430; font-weight: 500; }
.step-on .dot { border-color: #00a35c; color: #00684a; }
.lead { margin: 52px 0 0; width: 1030px; font-size: 22px; line-height: 30px; letter-spacing: .16px; }
.lnk { color: #016bf8; white-space: nowrap; }
.ext-i { display: inline-block; vertical-align: -2px; }
.tasks { margin: 17px 0 0; padding: 0; font-size: 22px; line-height: 30px; letter-spacing: .1px; }
.tasks li { margin: 0; }
.tasks li + li { margin-top: 29px; }
.tasks li::marker { font-size: 22px; }
.tasks h3 { margin: 0; font-size: 24.500px; line-height: 30px; font-weight: 700; color: #001e2b; letter-spacing: 0; }
.tasks li + li h3 { letter-spacing: .3px; }
.ok { display: flex; align-items: center; gap: 8px; margin: 17px 0 0 6px; letter-spacing: -.03px; }
.body1 { margin: 15px 0 0; width: 1040px; line-height: 30.500px; letter-spacing: .2px; }
.body2 { margin: 15px 0 0; letter-spacing: .29px; }
.creds { display: grid; grid-template-columns: 435px 435px 116px; column-gap: 31px; margin-top: 26px; align-items: end; }
.creds > div { display: flex; flex-direction: column; }
.creds label { font-size: 22px; font-weight: 700; line-height: 24px; margin-bottom: 11px; color: #001e2b; }
.inp { height: 54px; border: 1.500px solid #889397; border-radius: 6px; display: flex; align-items: center; padding-left: 18px; font-size: 20.500px; color: #1c2d38; }
.inp-pw { height: 51px; margin-bottom: 3px; border: 1.500px solid #e8edeb; color: #3d4f58; padding-right: 20px; justify-content: space-between; width: 434px; font-size: 21.500px; }
.inp-pw em { font-size: 16.500px; color: #889397; }
.copy { height: 54px; margin-bottom: 1px; border: 0; border-radius: 6px; background: #00684a; color: #e3fcf7; display: flex; align-items: center; justify-content: center; gap: 8px; font: 700 21.500px Lato, sans-serif; }
.create { display: block; margin-top: 23px; width: 241px; height: 54px; background: #f9fbfa; border: 1.500px solid #889397; border-radius: 6px; color: #001e2b; font: 500 21.500px Lato, sans-serif; padding: 0; }
.foot { display: flex; gap: 8px; margin: 97px 0 0 591px; }
.foot-a { width: 101px; height: 40px; border: 1.500px solid #889397; border-radius: 6px; background: #f9fbfa; }
.foot-b { width: 320px; height: 40px; border: 1.500px solid #c1c7c6; border-radius: 6px; background: #e8edeb; }

.vbar { width: 25px; background: #f1f1f1; position: relative; }
.vbar-in { width: 25px; }
.vbar-out { width: 24px; }
.vbar i { position: absolute; left: 6px; width: 0; height: 0; border-left: 6px solid transparent; border-right: 6px solid transparent; }
.up { top: 10px; border-bottom: 6px solid #505050; }
.up-dim { border-bottom-color: #a3a3a3; }
.dn { bottom: 34px; border-top: 6px solid #505050; }
.vbar b { position: absolute; display: block; left: 2px; width: 21px; background: #c1c1c1; }
.th-in { top: 134px; height: 527px; }
.th-out { top: 26px; height: 726px; }
.hbar { height: 25px; background: #f1f1f1; position: relative; }
.hbar-in { width: 1099px; }
.hbar-out { height: 23px; }
.hbar b { position: absolute; display: block; left: 25px; top: 2px; bottom: 2px; background: #c1c1c1; }
.hbar-in b { width: 977px; }
.hbar-out b { width: 1048px; bottom: 0; }
.hbar i { position: absolute; top: 7px; width: 0; height: 0; border-top: 6px solid transparent; border-bottom: 6px solid transparent; }
.lft { left: 9px; border-right: 6px solid #888; }
.rgt { border-left: 6px solid #505050; }
.hbar-in .rgt { left: 1084px; }
.hbar-out .rgt { left: 1110px; }

.fab-tr { position: absolute; left: 1063px; top: 650px; width: 54px; height: 54px; border-radius: 50%; background: #f9f9f9; box-shadow: 0 0 4px rgba(0,0,0,.12); display: flex; align-items: center; justify-content: center; }
.fab-a { font: 700 13px "Liberation Sans", sans-serif; fill: #3c3c3c; }
.fab-chat { position: absolute; left: 1022px; top: 698px; width: 72px; height: 72px; border-radius: 50%; background: #001e2b; padding: 18px 0 0 16px; }
.fab-brain { position: absolute; left: 1052px; top: 717px; width: 72px; height: 67px; border-radius: 34px 0 0 34px; background: #f8f8f8; box-shadow: -1px 1px 4px rgba(0,0,0,.12); display: flex; align-items: center; justify-content: center; padding-left: 4px; }

/* ---------- Edge window ---------- */
.edge { flex: 1; min-width: 0; display: flex; flex-direction: column; background: #f7f7f7; position: relative; }
.e-tabs { height: 60px; background: #ccc; display: flex; align-items: center; padding-left: 16px; }
.e-avatar { margin-top: 8px; }
.e-ws { margin: 8px 0 0 30px; }
.e-vt { margin: 8px 0 0 41px; }
.e-strip { display: flex; align-items: center; height: 60px; margin-left: 30px; }
.e-t { width: 29px; height: 60px; padding-top: 8px; display: flex; align-items: center; justify-content: center; border-left: 0; position: relative; opacity: .9; }
.e-t::before { content: ""; position: absolute; left: 0; top: 22px; height: 32px; width: 1px; background: #666; }
.e-t-pre { width: 25px; }
.e-t-last { width: 27px; }
.e-dots { width: 25px; height: 24px; background: #d59f9f; color: #fff; font: 700 11px "Liberation Sans", sans-serif; display: flex; align-items: center; justify-content: center; white-space: nowrap; overflow: hidden; }
.e-m { width: 22px; height: 22px; border-radius: 50%; background: #e09a9a; color: #f6eded; font: 700 14px "Liberation Sans", sans-serif; display: flex; align-items: center; justify-content: center; }
.e-3 { width: 24px; height: 24px; border-radius: 50%; background: #3545d8; color: #fff; font: 700 16px "Liberation Sans", sans-serif; display: flex; align-items: center; justify-content: center; }
.e-pac { width: 23px; height: 23px; border-radius: 50%; background: #e09a9a; position: relative; display: block; overflow: hidden; }
.e-pac i { position: absolute; right: -2px; top: 8px; width: 11px; height: 7px; background: #ccc; }
.e-jbl { width: 22px; height: 22px; border-radius: 50%; background: #e3a277; color: #f4ecde; font: 700 8px "Liberation Sans", sans-serif; display: flex; align-items: center; justify-content: center; }
.e-active { width: 47px; height: 48px; margin-top: 12px; background: #f7f7f7; border-radius: 12px 12px 0 0; display: flex; align-items: center; justify-content: center; }
.e-plus { margin: 8px 0 0 19px; }
.e-win { margin-left: auto; display: grid; grid-template-columns: 69px 69px 68px; margin-right: -1px; height: 60px; align-items: center; margin-top: -14px; }
.e-win span { display: flex; align-items: center; justify-content: center; }

.e-bar { height: 60px; display: flex; align-items: center; padding: 0 0 2px 30px; background: #f7f7f7; }
.e-omni { margin-left: 30px; width: 410px; height: 45px; background: #fff; border-radius: 23px; box-shadow: 0 1px 3px rgba(0,0,0,.08); display: flex; align-items: center; padding-left: 29px; }
.e-url { margin-left: 23px; width: 146px; font-size: 19.700px; color: #111; white-space: nowrap; }
.e-url i { color: #6e6e6e; }
.e-o1 { margin-left: 23px; }
.e-o2 { margin-left: 34px; }
.e-o3 { margin-left: 34px; }
.e-puz { margin-left: 30px; }
.e-split { margin-left: 41px; }
.e-dotsb { margin-left: 45px; }
.e-cop { margin-left: 35px; }

.e-favs { height: 48px; display: flex; align-items: center; padding: 0 0 6px 24px; }
.fav { display: flex; align-items: center; gap: 15px; font-size: 16.700px; color: #1a1a1a; white-space: nowrap; }
.fav-ev { margin-left: 27px; gap: 12px; }
.fav-more { margin-left: 157px; }
.fav-sep { width: 1px; height: 24px; background: #c4c4c4; margin-left: 21px; }
.fav-oth { margin-left: 15px; gap: 10px; }

.e-main { flex: 1; min-height: 0; display: flex; }
.video { width: 693px; height: 830px; margin-left: 6px; background: #0a140f; border-radius: 14px; position: relative; overflow: hidden; padding-top: 63px; }
.frame { height: 659px; display: flex; flex-direction: column; filter: blur(.45px); font-family: Lato, sans-serif; color: #3d4f58; background: #fff; }
.v-tabs { height: 30px; background: #f9adbe; display: flex; align-items: flex-end; color: #333; font-size: 9.500px; font-family: "Noto Sans", sans-serif; }
.v-tab { width: 120px; height: 26px; background: #fde0e6; border-radius: 0 10px 0 0; display: flex; align-items: center; justify-content: space-between; padding-right: 9px; white-space: nowrap; overflow: hidden; color: #555; }
.v-tab span { flex: none; width: 96px; overflow: hidden; letter-spacing: -.1px; }
.v-tab em { color: #222; font-size: 9px; }
.v-new { color: #222; font-size: 15px; margin: 0 0 4px 11px; line-height: 18px; }
.v-addr { height: 37px; background: #fddfe5; padding-top: 5px; }
.v-omni { height: 25px; background: #e0c4ca; border-radius: 13px 0 0 13px; margin-left: 4px; display: flex; align-items: center; font: 400 10.700px "Noto Sans", sans-serif; color: #47383b; padding-left: 5px; white-space: nowrap; letter-spacing: -.3px; }
.v-omni span:last-child { color: #6d5a5e; }
.v-chip { width: 17px; height: 17px; border-radius: 50%; background: #f0dce0; margin-right: 6px; display: flex; align-items: center; justify-content: center; }
.v-nav { height: 45px; display: flex; align-items: center; border-bottom: 1px solid #eee; font-size: 11.200px; }
.v-bars { margin-left: 1px; }
.v-coding { margin-left: 4px; color: #222; width: 70px; }
.v-drop { width: 0; height: 0; border-left: 3px solid transparent; border-right: 3px solid transparent; border-top: 4px solid #777; }
.v-gear { width: 10px; height: 10px; border: 2.500px solid #777; border-radius: 50%; margin-left: 22px; }
.v-am { margin-left: 22px; }
.v-drop2 { margin-left: 7px; }
.v-bill { margin-left: 24px; }
.v-sub { height: 35px; display: flex; align-items: center; box-shadow: 0 2px 3px rgba(0,0,0,.08); position: relative; z-index: 2; background: #fff; font-size: 11px; }
.v-d3 { margin-left: 47px; }
.v-keb { margin-left: 17px; font-size: 13px; color: #444; width: 8px; }
.v-cur { margin-left: 27px; color: #00684a; position: relative; font-weight: 700; }
.v-cur::after { content: ""; position: absolute; left: -6px; right: -6px; bottom: -8px; height: 2px; background: #00a35c; }
.v-as { margin-left: 27px; }
.v-ch { margin-left: 34px; }
.v-body { flex: 1; min-height: 0; display: flex; position: relative; overflow: hidden; }
.v-rail { width: 95px; display: flex; }
.v-railcol { width: 40px; position: relative; font-size: 10px; font-weight: 700; color: #14603f; }
.v-t { display: block; margin-top: 50px; height: 14px; }
.v-ng { display: block; margin-top: 217px; color: #555; font-weight: 400; }
.v-hl { display: block; height: 24px; margin-top: 56px; background: #e3f7f0; }
.v-scroll { width: 11px; height: 407px; background: linear-gradient(#f2f2f2 12px, #bdbdbd 12px); }
.v-main { width: 566px; }
.v-clip { margin: -8px 0 0 1px; font-size: 11.800px; line-height: 16px; white-space: nowrap; }
.v-cards { display: flex; gap: 8px; margin: 13px 0 0 -2px; }
.v-c { width: 149px; height: 64px; border: 1.500px solid #ccc; border-radius: 6px; margin-top: 1px; display: flex; align-items: center; justify-content: center; font-size: 10.600px; font-weight: 700; color: #1e2e38; }
.v-c-on { width: 162px; height: 67px; margin-top: 0; border: 2px solid #2ea86a; }
.v-info { margin-top: 13px; height: 47px; background: #e1f4fc; border-left: 5px solid #1a5de0; border-radius: 7px; display: flex; position: relative; padding: 8px 40px 0 32px; font-size: 10.800px; line-height: 15px; color: #445; }
.v-info p { margin: 0; }
.v-i { position: absolute; left: 11px; top: 12px; width: 11px; height: 11px; border-radius: 50%; background: #1a6cd6; color: #fff; font-size: 9px; line-height: 11px; text-align: center; font-weight: 700; }
.v-info em { position: absolute; right: 10px; top: 8px; color: #1a3c7c; font-size: 10px; font-weight: 700; }
.v-card { margin-top: 15px; height: 254px; border-radius: 16px; background: #fff; box-shadow: 0 1px 6px rgba(0,0,0,.12); padding: 19px 18px 0; }
.v-desc { margin: 0; font-size: 11px; line-height: 15px; }
.v-desc i { font-style: italic; }
.v-desc u { color: #4a6fc8; text-decoration: none; }
.v-l { display: block; font-size: 10px; font-weight: 700; color: #33424c; line-height: 12px; }
.v-lu { margin-top: 17px; }
.v-inp { height: 27px; width: 231px; border: 1px solid #c6c6c6; border-radius: 4px; display: flex; align-items: center; padding-left: 9px; font-size: 10.800px; color: #666; }
.v-focus { margin-top: 6px; height: 31px; border: 2px solid #3b9be0; border-radius: 6px; font-size: 11.500px; position: relative; }
.v-caret { width: 1px; height: 13px; background: #333; }
.v-cursor { position: absolute; left: -3px; top: 14px; }
.v-lp { margin-top: 10px; display: flex; align-items: center; gap: 6px; }
.v-eye { width: 10px; height: 10px; border-radius: 50%; background: #5a6b75; border: 2px solid #a4b0b6; }
.v-row { display: flex; margin-top: 8px; }
.v-btn { height: 27px; border: 1.500px solid #c6c6c6; border-radius: 4px; display: flex; align-items: center; justify-content: center; gap: 8px; font-size: 10.400px; font-weight: 700; color: #33424c; white-space: nowrap; }
.v-auto { margin-left: 11px; width: 184px; }
.v-copy { margin-left: 11px; width: 58px; font-weight: 400; gap: 3px; }
.v-create { margin-top: 19px; width: 76px; height: 28px; background: #14603f; color: #e8f5ef; border-radius: 4px; font-size: 10px; font-weight: 700; display: flex; align-items: center; justify-content: center; }
.v-h { margin: 35px 0 0; font-size: 15.300px; line-height: 20px; font-weight: 400; color: #1c2d38; }
.v-en { margin: 13px 0 0; font-size: 11.700px; line-height: 16px; white-space: nowrap; color: #22323c; }
.v-toast { position: absolute; left: 0; top: 408px; width: 235px; height: 54px; background: #f2f6f6; border-radius: 0 6px 6px 0; border-bottom: 4px solid #3f96e0; overflow: hidden; box-shadow: 0 0 3px rgba(0,0,0,.15); font-size: 10.400px; color: #3d4f58; }
.v-toast b { position: absolute; left: -1px; top: 10px; white-space: nowrap; }
.v-toast span { position: absolute; left: -22px; top: 26px; white-space: nowrap; }
.v-toast em { position: absolute; right: 13px; top: 8px; color: #444; font-weight: 700; }
.v-back { position: absolute; left: 38px; top: 473px; width: 28px; height: 28px; border-radius: 50%; background: #fff; box-shadow: 0 0 3px rgba(0,0,0,.2); display: flex; align-items: center; justify-content: center; }
.v-fade { position: absolute; left: 0; right: 0; top: 280px; bottom: 0; background: linear-gradient(transparent, rgba(190,190,190,.45) 96%, rgba(170,170,170,.6) 96%); pointer-events: none; }
.vid-up, .vid-dn, .vid-l, .vid-r { position: absolute; width: 0; height: 0; }
.vid-up { right: 5px; top: 12px; border-left: 7px solid transparent; border-right: 7px solid transparent; border-bottom: 8px solid #666; }
.vid-dn { right: 5px; top: 787px; border-left: 7px solid transparent; border-right: 7px solid transparent; border-top: 8px solid #666; }
.vid-l { left: 13px; top: 813px; border-top: 7px solid transparent; border-bottom: 7px solid transparent; border-right: 9px solid #666; }
.vid-r { left: 648px; top: 813px; border-top: 7px solid transparent; border-bottom: 7px solid transparent; border-left: 9px solid #666; }
.vid-h { position: absolute; left: 40px; top: 813px; width: 565px; height: 13px; border-radius: 7px; background: #666; }
.vid-v { position: absolute; left: 675px; top: 67px; width: 13px; height: 131px; border-radius: 7px; background: #666; }

.e-side { flex: 1; display: flex; flex-direction: column; align-items: center; position: relative; }
.e-side > svg { position: relative; }
.e-side > svg:nth-child(1) { margin-top: -35px; }
.e-side > svg:nth-child(2) { margin-top: 36px; }
.e-side > svg:nth-child(3) { margin-top: 41px; }
.e-side > svg:nth-child(4) { margin-top: 33px; }
.e-side > svg:nth-child(5) { margin-top: 34px; }
.e-side > svg:nth-child(6) { margin-top: 33px; }
.e-side > svg:nth-child(7) { margin-top: 35px; }
.e-side > svg:nth-child(8) { margin-top: 39px; }
.side-sep { width: 42px; height: 1px; background: #bdbdbd; flex: none; }
.side-s1 { margin-top: 35px; }
.e-side > .side-plus { margin-top: 37px; }
.side-s2 { margin-top: 263px; }
.e-side > .side-gear { margin-top: 19px; }

.rec { position: absolute; left: 733px; top: 108px; width: 29px; height: 145px; background: #111; border-radius: 6px; display: flex; flex-direction: column; align-items: center; padding-top: 4px; }
.rec i { width: 16px; height: 16px; border-radius: 50%; background: #f00; box-shadow: 0 0 0 1.500px #111, 0 0 0 3px #f33; }
.rec span { writing-mode: vertical-rl; color: #f2f2f2; font: 400 23px "Liberation Sans", sans-serif; margin-top: 9px; line-height: 26px; }

/* ---------- Taskbar ---------- */
.taskbar { height: 72px; background: #1c1c1c; border-top: 1px solid #333; display: flex; align-items: center; color: #fff; }
.tb-left { width: 479px; padding-left: 33px; }
.tb-flame { display: block; position: relative; width: 32px; }
.tb-flame b { position: absolute; left: 14px; top: -14px; width: 24px; height: 30px; border-radius: 50%; background: #c42b1c; font: 400 15px "Noto Sans", sans-serif; display: flex; align-items: center; justify-content: center; }
.tb-apps { display: flex; height: 100%; }
.app { width: 66.200px; height: 71px; display: flex; align-items: center; justify-content: center; position: relative; }
.app b { position: absolute; top: 8px; left: 38px; width: 24px; height: 30px; border-radius: 50%; display: flex; align-items: center; justify-content: center; font: 400 15px "Noto Sans", sans-serif; }
.bd-blue { background: #2f9fe8; color: #111; }
.bd-orange { background: #e8710a; color: #f6d7b8; }
.app-dot::after { content: ""; position: absolute; left: 29px; bottom: 3px; width: 9px; height: 7px; border-radius: 50%; background: #8b8b8b; }
.app-cur::before { content: ""; position: absolute; left: 4px; right: 4px; top: 5px; bottom: 5px; background: #2b2b2b; border-radius: 6px; }
.app-cur svg { position: relative; }
.u-blob { position: absolute; left: 21px; bottom: 5px; width: 24px; height: 6px; border-radius: 3px; background: #4cc2ff; }
.myhp { width: 36px; height: 38px; background: #0f9ad6; color: #fff; font: italic 400 13px "Liberation Sans", sans-serif; display: flex; align-items: center; justify-content: center; letter-spacing: -.5px; }
.myhp i { font-style: italic; font-weight: 700; }
.qmark { font: 700 26px "Liberation Sans", sans-serif; fill: #1a8ed1; text-anchor: middle; }
.tb-tray { margin-left: 89px; display: grid; grid-template-columns: 41px 56px 40px 74px 38px 36px 34px 115px 48px 56px; align-items: center; height: 100%; }
.tb-tray > span { display: flex; align-items: center; justify-content: center; }
.t-lang { text-align: center; font-size: 17px; line-height: 23px; }
.tb-tray > .t-clock { display: block; text-align: right; font-size: 17.700px; line-height: 24px; white-space: nowrap; }
.zz { font: 700 9px "Liberation Sans", sans-serif; fill: #fff; }
.t-cop { position: relative; }
.t-cop b { position: absolute; left: 14px; top: 27px; width: 28px; height: 16px; background: #f0b429; color: #111; font: 700 10px "Liberation Sans", sans-serif; border-radius: 3px; display: flex; align-items: center; justify-content: center; }
```
